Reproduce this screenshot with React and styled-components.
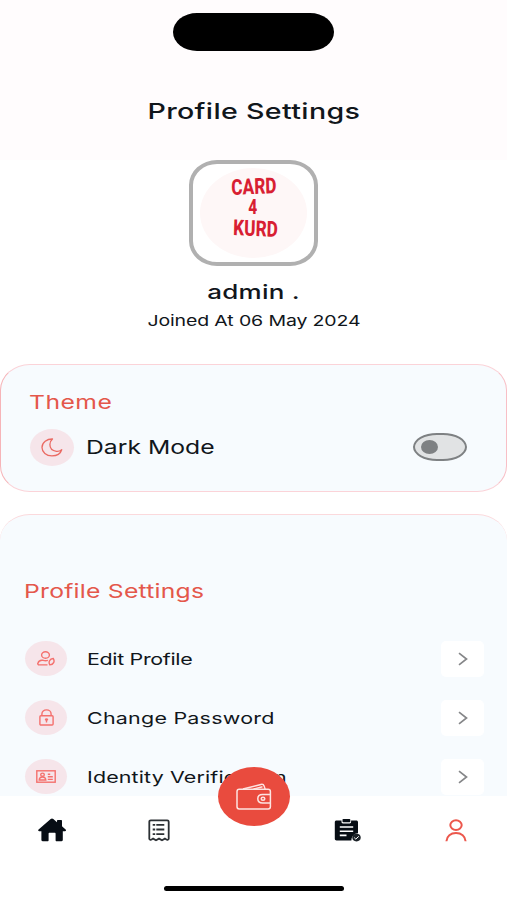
import React from "react";
import styled, { createGlobalStyle } from "styled-components";

const MoonIcon = () => (
  <svg width="22" height="19" viewBox="0 0 22 19" fill="none" stroke="#ea6a63" strokeWidth="1.3" strokeLinejoin="round">
    <path d="M11.500 1C6 .9 1 4.300 1 9.500c0 4.700 4.300 8.300 9.900 8.300 4.600 0 8.700-2.300 9.800-6.100-1.700 1.300-3.500 1.800-5.300 1.600-3.900-.4-6.500-3.100-6.500-6.700 0-2.200.9-4.200 2.600-5.600z" />
  </svg>
);

const EditUserIcon = () => (
  <svg width="18" height="15" viewBox="0 0 18 15" fill="none" stroke="#f4706d" strokeWidth="1.4">
    <ellipse cx="8.5" cy="4" rx="3.9" ry="3.3" />
    <path d="M10.5 13.900H2.2C1 13.900.7 13 .9 12.300 1.400 10.300 3.600 8.900 6.100 9.300c1.700.5 3.300.5 4.800 0" />
    <path d="M12.800 13.900c-1.600-2.700-.2-6.200 3.400-6.400 1.900 2.700.4 6.200-3.400 6.400z" />
  </svg>
);

const LockIcon = () => (
  <svg width="15" height="17" viewBox="0 0 15 17" fill="none" stroke="#f4706d" strokeWidth="1.4">
    <rect x="0.9" y="6.8" width="13.2" height="9.2" rx="1" />
    <path d="M2.900 6.800V5c0-2.400 2-4.100 4.600-4.100s4.600 1.700 4.600 4.100v1.800" />
    <ellipse cx="7.5" cy="10.5" rx="1.6" ry="1.3" fill="#f4706d" stroke="none" />
    <path d="M7.500 10.500v3" />
  </svg>
);

const IdCardIcon = () => (
  <svg width="20" height="13" viewBox="0 0 20 13" fill="none" stroke="#f4706d" strokeWidth="1.4">
    <rect x="0.8" y="0.8" width="18.4" height="11.4" />
    <ellipse cx="6.5" cy="4.7" rx="1.8" ry="1.6" />
    <path d="M3.200 10c.2-2.300 1.500-3 3.300-3s3.100.7 3.300 3zM11.800 4.200h2.400M11.800 6.800h5M11.800 9.400h5" />
  </svg>
);

const ChevronIcon = () => (
  <svg width="10" height="14" viewBox="0 0 10 14" fill="none" stroke="#858688" strokeWidth="1.7">
    <path d="M1 1.200l7.500 5.800L1 12.800" />
  </svg>
);

const HomeIcon = () => (
  <svg width="28" height="24" viewBox="0 0 28 24" fill="#070d14">
    <path d="M12.700 1.100c.8-.7 1.800-.7 2.600 0l3.700 3.100V3c0-.6.4-1 1-1h3c.6 0 1 .4 1 1v5.300l3.600 3.100c.8.8.4 1.800-.7 1.800h-2.100v8.900c0 .7-.5 1.200-1.200 1.200h-5c-.6 0-1-.4-1-1v-6.500c0-.6-.4-1-1-1h-5c-.6 0-1 .4-1 1v6.500c0 .6-.4 1-1 1h-5c-.700 0-1.200-.5-1.200-1.200v-8.900H1.200c-1.100 0-1.500-1-.6-1.800z" />
  </svg>
);

const ReceiptIcon = () => (
  <svg width="22" height="23" viewBox="0 0 22 23" fill="none" stroke="#2c3034" strokeWidth="1.8">
    <path d="M1.300 19.800V2.800c0-.9.6-1.500 1.500-1.500h16.400c.9 0 1.500.6 1.500 1.500v17c0 .8-1.300 1.400-2.300.8l-1.500-1-2.900 1.700-3-1.700-3 1.700-2.900-1.700-1.500 1c-1 .6-2.300 0-2.300-.8z" />
    <path d="M4.700 5.800h2.500M8.300 5.800h8M4.700 10.500h2.500M8.300 10.500h8M4.700 15.200h2.500M8.300 15.200h8" />
  </svg>
);

const TasksIcon = () => (
  <svg width="28" height="25" viewBox="0 0 28 25" fill="none">
    <path d="M2.600 2.500h4.900v1.600c0 .8.600 1.400 1.400 1.400h6.800c.8 0 1.400-.6 1.400-1.400V2.500h5.100c1.100 0 1.800.7 1.800 1.700v11c-3.800.2-6.300 2.500-6.600 7.300H2.600c-1.100 0-1.800-.7-1.800-1.700V4.200c0-1 .7-1.700 1.800-1.700z" fill="#070d14" />
    <rect x="8.5" y="1" width="7.8" height="3.2" rx="0.8" fill="#070d14" />
    <path d="M5.800 9h13.400M5.800 13.200h13.400M5.800 17.400h6.700" stroke="#fff" strokeWidth="1.6" />
    <ellipse cx="22.5" cy="19.600" rx="4.200" ry="3.800" fill="#1c2228" />
    <path d="M20.200 19.600l1.600 1.500 3-2.800" stroke="#fff" strokeWidth="1" />
  </svg>
);

const UserIcon = () => (
  <svg width="22" height="23" viewBox="0 0 22 23" fill="none" stroke="#ec574c" strokeWidth="2">
    <ellipse cx="11" cy="6.1" rx="5.7" ry="4.8" />
    <path d="M1.400 22.300c.3-5 4.300-8.200 9.600-8.200s9.300 3.200 9.600 8.200" />
  </svg>
);

const WalletIcon = () => (
  <svg width="36" height="28" viewBox="0 0 36 28" fill="none" stroke="#fde4e1" strokeWidth="1.5" strokeLinejoin="round">
    <path d="M34.400 11.500V8.500c0-1.400-.9-2.200-2.400-2.200H3.300C1.900 6.300 1 7.100 1 8.500v15.200c0 1.400.9 2.200 2.300 2.200h28.800c1.400 0 2.300-.8 2.300-2.200v-3.800" />
    <path d="M34.400 11.500h-7.800c-2.900 0-4.800 1.800-4.800 4.200s1.900 4.200 4.800 4.200h7.800z" />
    <ellipse cx="27" cy="15.700" rx="1.8" ry="1.5" />
    <path d="M7 6.100l17.900-4.700c1.700-.4 2.700.1 3.200 1.500l1 3.200M17.500 6.100l9-2.300" />
  </svg>
);

const settings = [
  { label: "Edit Profile", spacing: -0.26, icon: <EditUserIcon /> },
  { label: "Change Password", spacing: 0.18, icon: <LockIcon /> },
  { label: "Identity Verification", spacing: 0.1, icon: <IdCardIcon /> },
];

const App = () => {
  return (
    <>
      <GlobalStyle />
      <Screen>
        <Header>
          <Island />
          <Label as="h1" $size={22} $weight={500} $height={34} $spacing={0.26} $center>
            Profile Settings
          </Label>
        </Header>
        <Profile>
          <Avatar>
            <Brand>
              <Word $tilt={-2} $shift={0}>CARD</Word>
              <Word $tilt={0} $shift={-2} $size={20}>4</Word>
              <Word $tilt={2} $shift={5}>KURD</Word>
            </Brand>
          </Avatar>
          <Label $size={20} $weight={500} $height={30} $spacing={0.16} $center>
            admin .
          </Label>
          <Label $size={15} $height={28} $spacing={-0.1} $center>
            Joined At 06 May 2024
          </Label>
        </Profile>
        <ThemeCard>
          <Label as="h2" $size={19} $height={30} $spacing={0.35} $color="#e4574b">
            Theme
          </Label>
          <ThemeRow>
            <IconCircle $width={44} $height={37}>
              <MoonIcon />
            </IconCircle>
            <Label $size={19} $height={30} $spacing={0}>
              Dark Mode
            </Label>
            <Toggle type="button" aria-label="Dark Mode">
              <Knob />
            </Toggle>
          </ThemeRow>
        </ThemeCard>
        <SettingsCard>
          <Label as="h2" $size={19} $height={30} $spacing={0.18} $color="#e4574b">
            Profile Settings
          </Label>
          <List>
            {settings.map((item) => (
              <Row key={item.label}>
                <IconCircle $width={42} $height={35}>
                  {item.icon}
                </IconCircle>
                <Label $size={16.5} $height={26} $spacing={item.spacing}>
                  {item.label}
                </Label>
                <ArrowBox>
                  <ChevronIcon />
                </ArrowBox>
              </Row>
            ))}
          </List>
        </SettingsCard>
        <Nav>
          <NavItems>
            <HomeIcon />
            <ReceiptIcon />
            <TasksIcon />
            <UserIcon />
          </NavItems>
          <HomeIndicator />
          <WalletButton>
            <WalletIcon />
          </WalletButton>
        </Nav>
      </Screen>
    </>
  );
};

const GlobalStyle = createGlobalStyle`
  body {
    margin: 0;
    background: #fff;
  }
  * {
    box-sizing: border-box;
  }
  svg {
    display: block;
    flex: none;
  }
`;

const Screen = styled.div`
  display: flex;
  flex-direction: column;
  width: 507px;
  height: 900px;
  overflow: hidden;
  background: #fff;
  font-family: "Inter", sans-serif;
`;

/* wide lettering: every label is stretched horizontally */
const Label = styled.div`
  margin: 0;
  flex: none;
  font-size: ${(p) => p.$size}px;
  font-weight: ${(p) => p.$weight || 400};
  line-height: ${(p) => p.$height}px;
  letter-spacing: ${(p) => p.$spacing}px;
  color: ${(p) => p.$color || "#11161b"};
  white-space: nowrap;
  transform: scaleX(1.3);
  transform-origin: ${(p) => (p.$center ? "center" : "left center")};
`;

const Header = styled.header`
  display: flex;
  flex-direction: column;
  align-items: center;
  flex: none;
  height: 160px;
  padding-top: 13px;
  background: #fffcfd;
`;

const Island = styled.div`
  width: 161px;
  height: 38px;
  margin-bottom: 43px;
  border-radius: 24px / 19px;
  background: #000;
`;

const Profile = styled.section`
  display: flex;
  flex-direction: column;
  align-items: center;
  flex: none;
  height: 204px;
`;

const Avatar = styled.div`
  display: flex;
  align-items: center;
  justify-content: center;
  width: 129px;
  height: 106px;
  margin-bottom: 11px;
  border: 4px solid #b0b0b0;
  border-radius: 28px / 25px;
  background: #fff;
`;

const Brand = styled.div`
  display: flex;
  flex-direction: column;
  align-items: center;
  width: 107px;
  height: 90px;
  padding-top: 8px;
  border-radius: 50%;
  background: #fef7f7;
`;

const Word = styled.span`
  margin-left: ${(p) => p.$shift}px;
  font-family: "Roboto", sans-serif;
  font-size: ${(p) => p.$size || 22}px;
  font-weight: 800;
  line-height: 21px;
  color: #d81f33;
  transform: scaleX(0.78) rotate(${(p) => p.$tilt}deg);
`;

const ThemeCard = styled.section`
  flex: none;
  height: 128px;
  margin-bottom: 22px;
  padding: 23px 39px 0 28px;
  border: 1px solid #fbd3d8;
  border-left-color: #f6b4b8;
  border-right-color: #f8bfc6;
  border-radius: 30px / 26px;
  background: #f7fbfe;
`;

const ThemeRow = styled.div`
  display: flex;
  align-items: center;
  height: 37px;
  margin-top: 11px;
  padding-left: 1px;
  gap: 12px;
`;

const IconCircle = styled.div`
  display: flex;
  align-items: center;
  justify-content: center;
  flex: none;
  width: ${(p) => p.$width}px;
  height: ${(p) => p.$height}px;
  border-radius: 50%;
  background: #f6e5ea;
`;

const Toggle = styled.button`
  display: flex;
  align-items: center;
  width: 54px;
  height: 28px;
  margin-left: auto;
  margin-bottom: 1px;
  padding: 0 6px;
  border: 2px solid #7e8183;
  border-radius: 24px / 14px;
  background: #e1e3e4;
`;

const Knob = styled.span`
  width: 17px;
  height: 14px;
  border-radius: 50%;
  background: #7e8183;
`;

const SettingsCard = styled.section`
  flex: none;
  height: 282px;
  padding: 62px 23px 0 24px;
  border-top: 1px solid #fbd9dc;
  border-radius: 30px 30px 0 0 / 26px 26px 0 0;
  background: #f7fbfe;
`;

const List = styled.div`
  margin-top: 22px;
  padding-left: 1px;
`;

const Row = styled.div`
  display: flex;
  align-items: center;
  gap: 20px;
  height: 59px;
`;

const ArrowBox = styled.div`
  display: flex;
  align-items: center;
  justify-content: center;
  width: 43px;
  height: 36px;
  margin-left: auto;
  border-radius: 5px;
  background: #fff;
`;

const Nav = styled.nav`
  position: relative;
  display: flex;
  flex-direction: column;
  align-items: center;
  flex: none;
  height: 104px;
  padding-top: 20px;
  background: #fff;
`;

const NavItems = styled.div`
  display: grid;
  grid-template-columns: 105px 107px 186px 109px;
  align-items: center;
  width: 507px;
  height: 28px;
  margin-bottom: 42px;

  > :nth-child(1) {
    margin-left: 38px;
  }
  > :nth-child(2) {
    margin-left: 43px;
  }
  > :nth-child(3) {
    margin-left: 122px;
  }
  > :nth-child(4) {
    margin-left: 47px;
  }
`;

const HomeIndicator = styled.div`
  width: 180px;
  height: 5px;
  border-radius: 3px;
  background: #000;
`;

/* floats over the top edge of the nav bar */
const WalletButton = styled.div`
  position: absolute;
  top: -29px;
  left: 218px;
  display: flex;
  align-items: center;
  justify-content: center;
  width: 72px;
  height: 59px;
  border-radius: 50%;
  background: #e94b3e;
`;

export default App;
